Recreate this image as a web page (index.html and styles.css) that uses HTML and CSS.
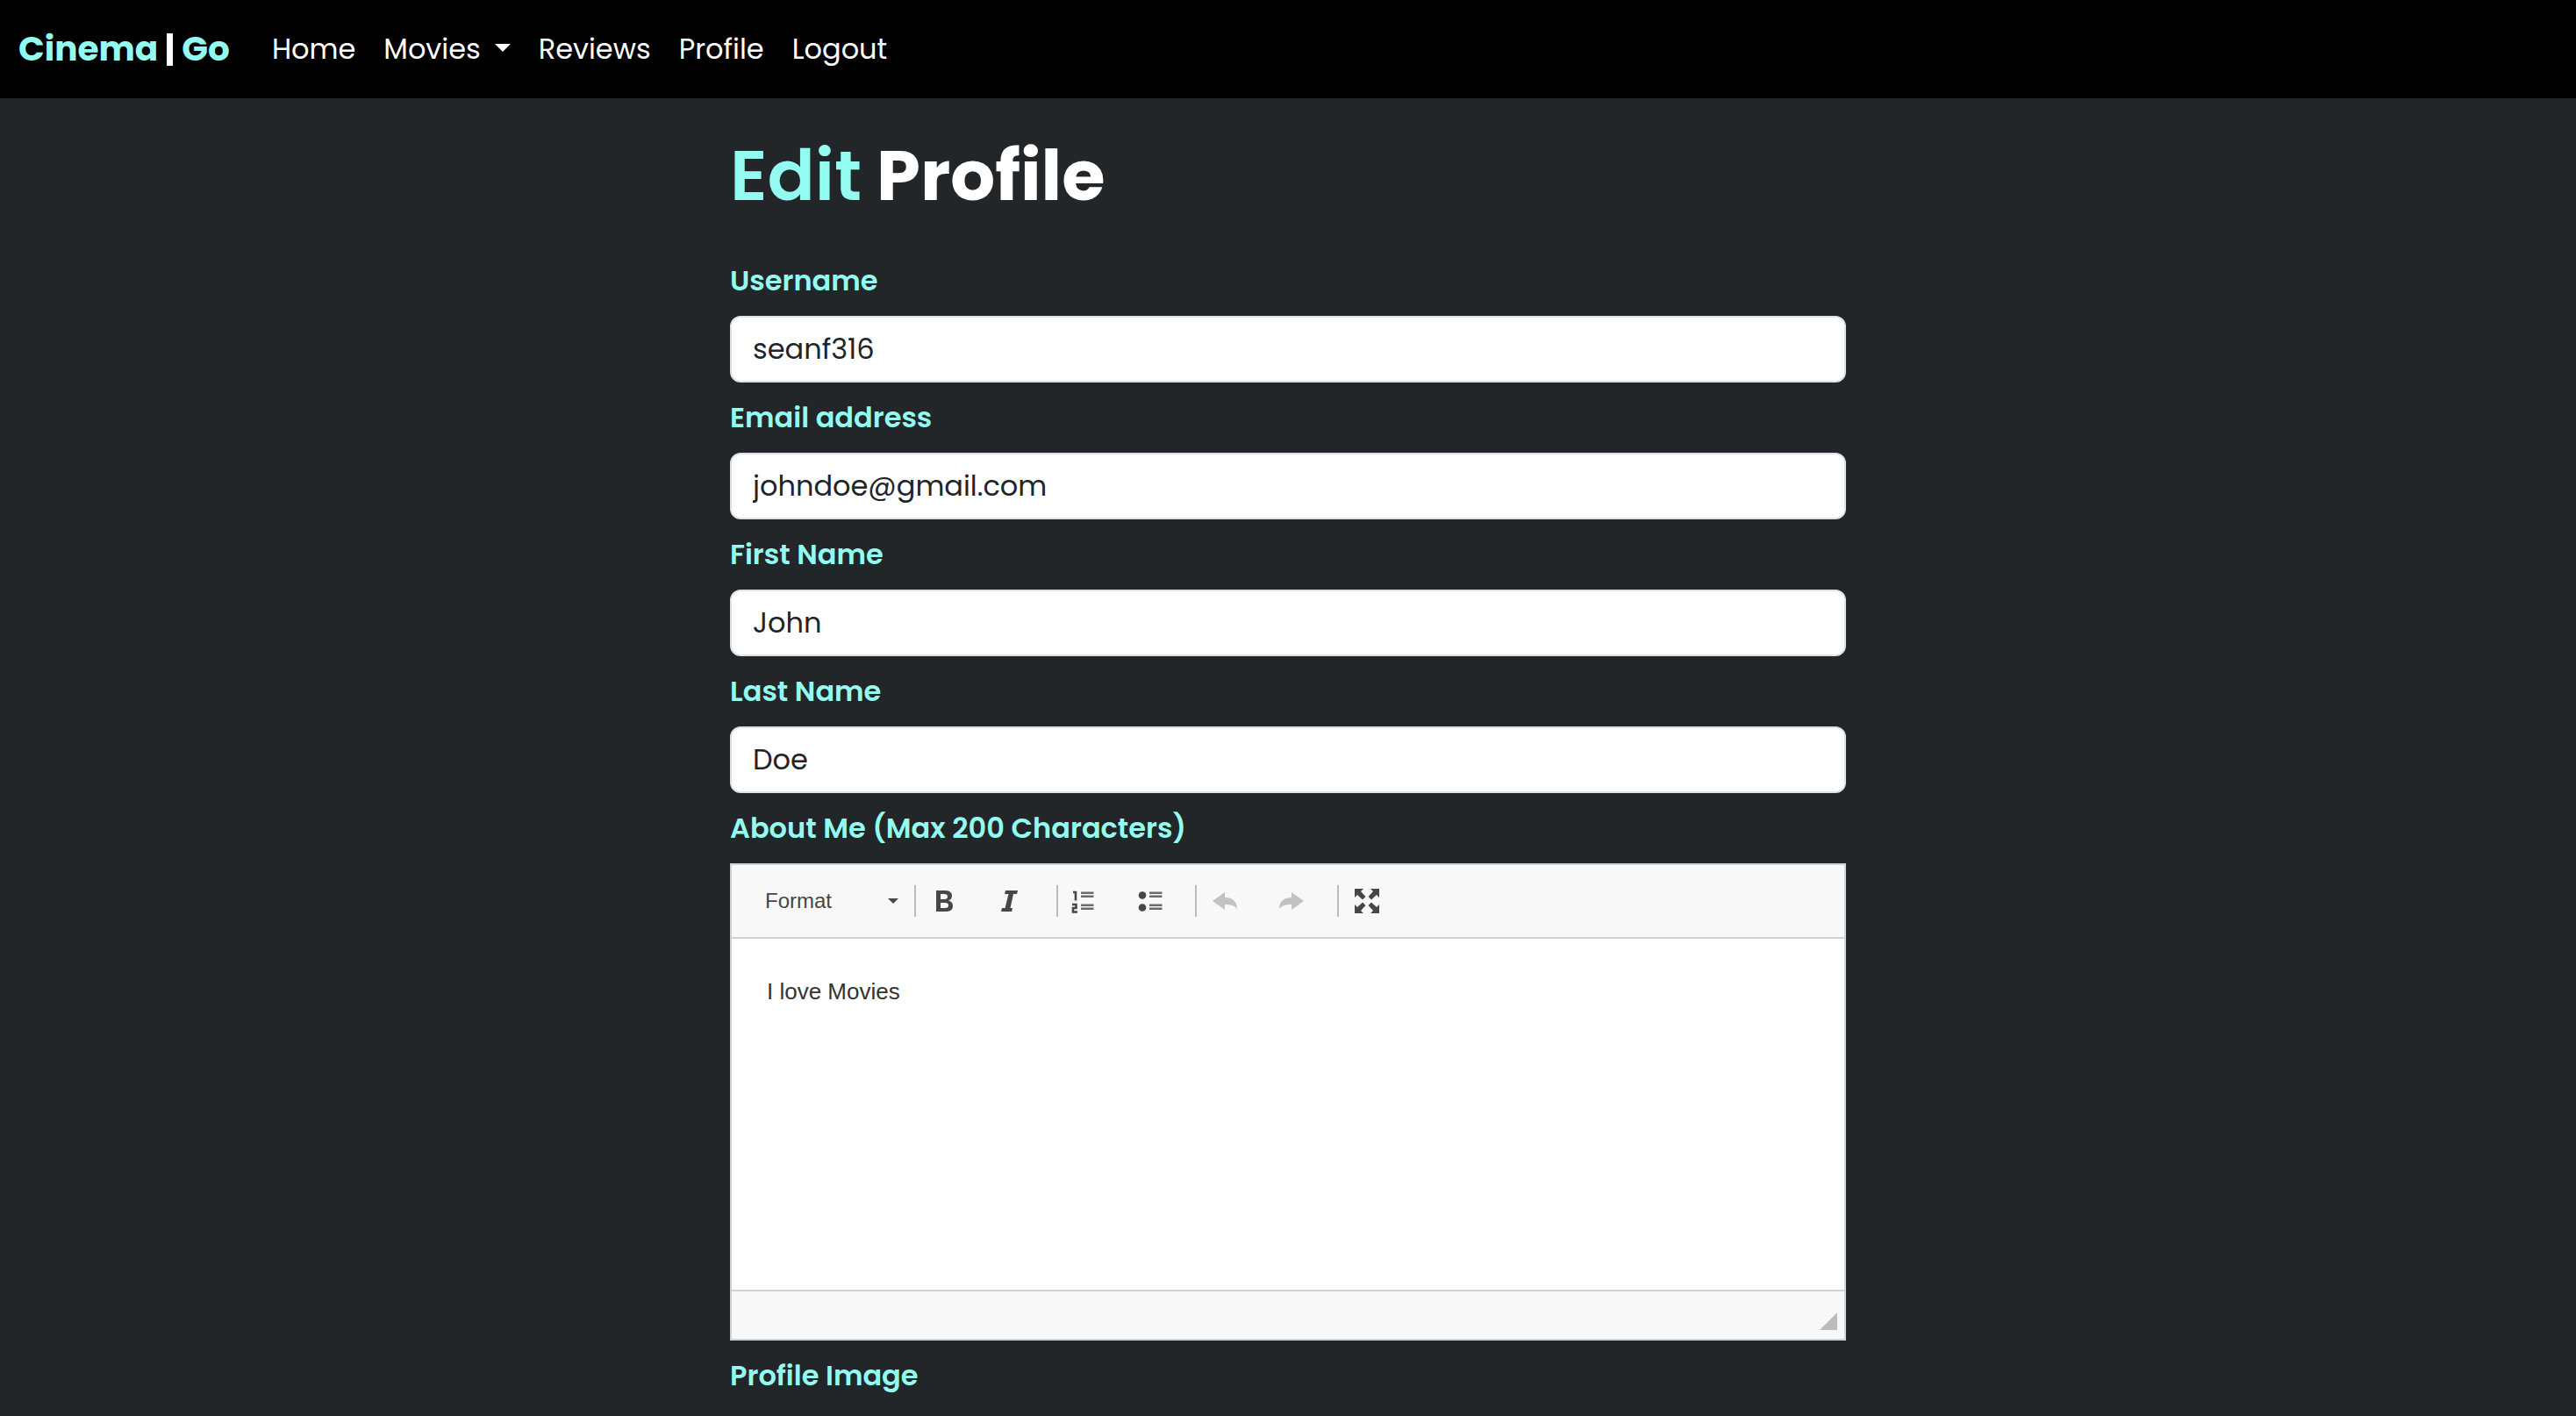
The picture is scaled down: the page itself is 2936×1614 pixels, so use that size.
FILE: index.html
```html
<!DOCTYPE html>
<html lang="en">
<head>
  <meta charset="utf-8">
  <meta name="viewport" content="width=device-width, initial-scale=1">
  <title>Cinema|Go - Edit Profile</title>
  <link rel="stylesheet" href="styles.css">
</head>
<body>
  <header class="navbar">
    <a class="brand" href="#">Cinema<span class="brand-bar"></span>Go</a>
    <nav class="nav">
      <a href="#">Home</a>
      <a class="dropdown" href="#">Movies</a>
      <a href="#">Reviews</a>
      <a href="#">Profile</a>
      <a href="#">Logout</a>
    </nav>
  </header>

  <main class="container">
    <form class="profile-form">
      <h1 class="title"><span class="accent">Edit</span> Profile</h1>

      <label class="label" for="username">Username</label>
      <input class="control" id="username" type="text" value="seanf316">

      <label class="label" for="email">Email address</label>
      <input class="control" id="email" type="email" value="johndoe@gmail.com">

      <label class="label" for="first-name">First Name</label>
      <input class="control" id="first-name" type="text" value="John">

      <label class="label" for="last-name">Last Name</label>
      <input class="control" id="last-name" type="text" value="Doe">

      <label class="label" for="about">About Me (Max 200 Characters)</label>
      <div class="editor">
        <div class="toolbar">
          <button class="format" type="button">Format</button>
          <div class="group">
            <button class="tool" type="button" aria-label="Bold">
              <svg viewBox="0 0 32 32"><path fill-rule="evenodd" d="M7 4H17C22 4 25 6 25 10C25 13 23 15 21 15.500C24 16 26 18 26 21.500C26 26 23 28 18 28H7ZM12 8V14H16C19 14 20 13 20 11C20 9 19 8 16 8ZM12 18V24H17C20 24 21 23 21 21C21 19 20 18 17 18Z"/></svg>
            </button>
            <button class="tool" type="button" aria-label="Italic">
              <svg viewBox="0 0 32 32"><path d="M10 4H24L23 8H19L15.500 24H18L17 28H5L6 24H9.500L13.500 8H9Z"/></svg>
            </button>
          </div>
          <div class="group group-lists">
            <button class="tool" type="button" aria-label="Insert numbered list">
              <svg viewBox="0 0 32 32"><path fill="none" stroke="#474747" stroke-width="2.600" d="M5 6H8V15.500M4 20H8.500V24H5V28.500H10"/><path fill="#6b6b6b" d="M14 5.500H28.500V8H14ZM14 9.500H28.500V12H14ZM14 19.500H28.500V22H14ZM14 23.500H28.500V26H14Z"/></svg>
            </button>
            <button class="tool" type="button" aria-label="Insert bulleted list">
              <svg viewBox="0 0 32 32"><circle cx="8" cy="9.500" r="4.300"/><circle cx="8" cy="23.500" r="4.300"/><path fill="#6b6b6b" d="M16 5.500H30.500V8H16ZM16 9.500H30.500V12H16ZM16 19.500H30.500V22H16ZM16 23.500H30.500V26H16Z"/></svg>
            </button>
          </div>
          <div class="group">
            <button class="tool" type="button" aria-label="Undo" disabled>
              <svg viewBox="0 0 32 32"><path d="M2 16L16 6V12C24 12 30 16 30 25C27 21 23 20 16 20V26Z"/></svg>
            </button>
            <button class="tool" type="button" aria-label="Redo" disabled>
              <svg viewBox="0 0 32 32"><path d="M30 16L16 6V12C8 12 2 16 2 25C5 21 9 20 16 20V26Z"/></svg>
            </button>
          </div>
          <div class="group">
            <button class="tool" type="button" aria-label="Maximize">
              <svg viewBox="0 0 32 32"><path d="M2 2H12L9 5L14.500 11L11 14.500L5 9L2 12ZM30 2V12L27 9L21 14.500L17.500 11L23 5L20 2ZM2 30V20L5 23L11 17.500L14.500 21L9 27L12 30ZM30 30H20L23 27L17.500 21L21 17.500L27 23L30 20Z"/></svg>
            </button>
          </div>
        </div>
        <textarea class="editor-body" id="about">I love Movies</textarea>
        <div class="editor-footer"><span class="resizer"></span></div>
      </div>

      <div class="label">Profile Image</div>
    </form>
  </main>
</body>
</html>
```
FILE: styles.css
```css
* {
  box-sizing: border-box;
}

body {
  margin: 0;
  min-height: 100vh;
  background: #222629;
  color: #fff;
  font-family: Poppins, Inter, sans-serif;
  font-size: 32px;
  line-height: 48px;
}

.navbar {
  display: flex;
  align-items: center;
  gap: 48px;
  min-height: 112px;
  padding: 16px 21px;
  background: #000;
}

.navbar a {
  color: #fff;
  text-decoration: none;
}

.navbar .brand {
  display: flex;
  align-items: center;
  color: #94fbf0;
  font-size: 39px;
  font-weight: 700;
}

.brand-bar {
  width: 7px;
  height: 37px;
  margin: 0 10px;
  background: #fff;
}

.nav {
  display: flex;
  gap: 32px;
}

.dropdown::after {
  content: "";
  display: inline-block;
  margin-left: 16px;
  border: 9px solid transparent;
  border-top-color: #fff;
  border-bottom: 0;
  vertical-align: 8px;
}

.container {
  max-width: 2640px;
  margin: 0 auto;
}

.profile-form {
  width: 50%;
  margin: 0 auto;
  padding: 40px 24px 0;
}

.title {
  margin: 0 0 48px;
  font-size: 80px;
  font-weight: 700;
  line-height: 96px;
}

.accent {
  color: #94fbf0;
  font-weight: 600;
}

.label {
  display: block;
  margin-bottom: 16px;
  color: #94fbf0;
  font-weight: 600;
}

.control {
  display: block;
  width: 100%;
  height: 76px;
  margin: 0 0 16px;
  padding: 12px 24px;
  border: 2px solid #dee2e6;
  border-radius: 12px;
  background: #fff;
  color: #212529;
  font: inherit;
}

.editor {
  margin-bottom: 16px;
  border: 2px solid #d1d1d1;
  background: #fff;
}

.toolbar {
  display: flex;
  align-items: center;
  height: 84px;
  padding-left: 38px;
  border-bottom: 2px solid #d1d1d1;
  background: #f8f8f8;
}

.format {
  display: flex;
  align-items: center;
  justify-content: space-between;
  width: 170px;
  padding: 0 18px 0 0;
  border: 0;
  background: none;
  color: #474747;
  font: 24px "Liberation Sans", Arial, sans-serif;
}

.format::after {
  content: "";
  border: 6px solid transparent;
  border-top-color: #474747;
  border-bottom: 0;
}

.group {
  display: flex;
  gap: 20px;
  height: 36px;
  padding: 0 24px 0 4px;
  border-left: 2px solid #bcbcbc;
}

.group-lists {
  padding-left: 0;
}

.tool {
  display: flex;
  align-items: center;
  justify-content: center;
  width: 56px;
  padding: 0;
  border: 0;
  background: none;
}

.tool svg {
  width: 32px;
  height: 32px;
  fill: #474747;
}

.tool:disabled {
  opacity: 0.3;
}

.editor-body {
  display: block;
  width: 100%;
  height: 400px;
  padding: 40px;
  border: 0;
  resize: none;
  background: #fff;
  color: #333;
  font: 26px/40px "Liberation Sans", Arial, sans-serif;
}

.editor-footer {
  display: flex;
  align-items: flex-end;
  justify-content: flex-end;
  height: 56px;
  padding: 0 8px 10px;
  border-top: 2px solid #d1d1d1;
  background: #f8f8f8;
}

.resizer {
  width: 20px;
  height: 20px;
  background: #bcbcbc;
  clip-path: polygon(100% 0, 100% 100%, 0 100%);
}
```
